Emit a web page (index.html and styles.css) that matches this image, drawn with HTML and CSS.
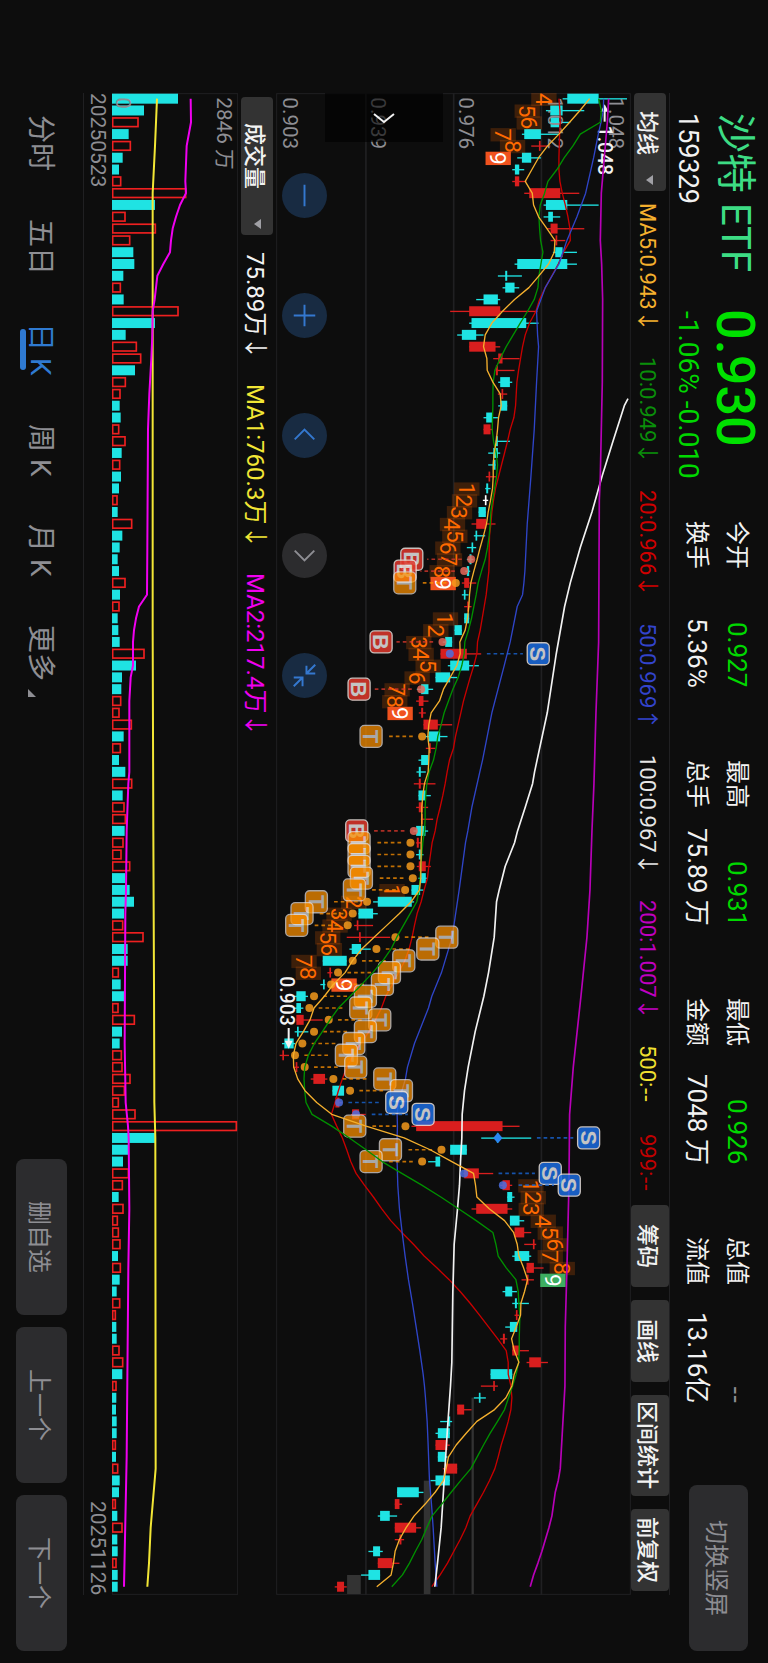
FILE: index.html
```html
<!DOCTYPE html>
<html lang="zh-CN">
<head>
<meta charset="utf-8">
<meta name="viewport" content="width=device-width, initial-scale=1">
<title>沙特ETF 159329</title>
<link rel="stylesheet" href="styles.css">
</head>
<body>
<main class="screen">
  <header class="header">
    <div class="identity">
      <h1 class="name">沙特 ETF</h1>
      <div class="code">159329</div>
    </div>
    <div class="quote">
      <div class="price">0.930</div>
      <div class="change">-1.06% -0.010</div>
    </div>
    <dl class="stats">
      <div class="stat"><dt>今开</dt><dd class="down">0.927</dd></div>
      <div class="stat"><dt>最高</dt><dd class="down">0.931</dd></div>
      <div class="stat"><dt>最低</dt><dd class="down">0.926</dd></div>
      <div class="stat"><dt>总值</dt><dd class="muted">--</dd></div>
      <div class="stat"><dt>换手</dt><dd>5.36%</dd></div>
      <div class="stat"><dt>总手</dt><dd>75.89 万</dd></div>
      <div class="stat"><dt>金额</dt><dd>7048 万</dd></div>
      <div class="stat"><dt>流值</dt><dd>13.16亿</dd></div>
    </dl>
    <button class="pill switch" type="button">切换竖屏</button>
  </header>

  <section class="ma-bar">
    <button class="picker" type="button">均线<svg class="caret" viewBox="0 0 7 10"><path d="M7 0v10L0 5z"/></svg></button>
    <div class="ma-list">
      <span class="ma5">MA5:0.943<span class="arrow">↓</span></span>
      <span class="ma10">10:0.949<span class="arrow">↓</span></span>
      <span class="ma20">20:0.966<span class="arrow">↓</span></span>
      <span class="ma50">50:0.969<span class="arrow">↑</span></span>
      <span class="ma100">100:0.967<span class="arrow">↓</span></span>
      <span class="ma200">200:1.007<span class="arrow">↓</span></span>
      <span class="ma500">500:<span class="dashes">--</span></span>
      <span class="ma999">999:<span class="dashes">--</span></span>
    </div>
    <div class="tools">
      <button class="tool" type="button">筹码</button>
      <button class="tool" type="button">画线</button>
      <button class="tool wide" type="button">区间统计</button>
      <button class="tool" type="button">前复权</button>
    </div>
  </section>

  <section class="chart">
    <svg class="plot" id="price-plot" viewBox="18 0 1064 4506" preserveAspectRatio="none"></svg>
    <button class="collapse" type="button" aria-label="收起"><svg viewBox="0 0 24 12"><path d="M2 2l10 8 10-8"/></svg></button>
    <div class="controls">
      <button class="round" type="button" aria-label="缩小"><svg viewBox="0 0 46 46"><path d="M23 12v22"/></svg></button>
      <button class="round" type="button" aria-label="放大"><svg viewBox="0 0 46 46"><path d="M23 12v22M12 23h22"/></svg></button>
      <button class="round" type="button" aria-label="向左"><svg viewBox="0 0 46 46"><path d="M13 27l10-10 10 10"/></svg></button>
      <button class="round off" type="button" aria-label="向右"><svg viewBox="0 0 46 46"><path d="M13 18l10 10 10-10"/></svg></button>
      <button class="round" type="button" aria-label="退出全屏"><svg viewBox="0 0 46 46"><path d="M34 12l-9 9M25 13v8h9M12 34l9-9M12 25h9v9"/></svg></button>
    </div>
  </section>

  <section class="volume-bar">
    <button class="picker volume-picker" type="button">成交量<svg class="caret" viewBox="0 0 7 10"><path d="M7 0v10L0 5z"/></svg></button>
    <span class="vol">75.89万<span class="arrow">↓</span></span>
    <span class="vol1">MA1:760.3万<span class="arrow">↓</span></span>
    <span class="vol2">MA2:217.4万<span class="arrow">↓</span></span>
  </section>

  <section class="volume">
    <svg class="plot" id="volume-plot" viewBox="336 0 378 4506" preserveAspectRatio="none"></svg>
  </section>
  <div class="dates"><span>20250523</span><span>20251126</span></div>

  <footer class="footer">
    <nav class="tabs">
      <a class="tab" href="#min">分时</a>
      <a class="tab" href="#five">五日</a>
      <a class="tab current" href="#day">日 K</a>
      <a class="tab" href="#week">周 K</a>
      <a class="tab" href="#month">月 K</a>
      <a class="tab" href="#more">更多<svg class="corner" viewBox="0 0 8 8"><path d="M0 0v8h8z"/></svg></a>
    </nav>
    <div class="actions">
      <button class="pill" type="button">删自选</button>
      <button class="pill" type="button">上一个</button>
      <button class="pill" type="button">下一个</button>
    </div>
  </footer>
</main>
<script src="script.js"></script>
</body>
</html>
```
FILE: styles.css
```css
* { box-sizing: border-box; }

body {
  margin: 0;
  background: #0d0d0d;
  color: #f2f2f2;
  font-family: Roboto, "Noto Sans CJK SC", sans-serif;
}

button {
  margin: 0;
  padding: 0;
  border: 0;
  font: inherit;
  color: inherit;
  writing-mode: inherit;
  text-orientation: inherit;
  white-space: nowrap;
}

svg { writing-mode: horizontal-tb; display: block; }

/* The screen reads sideways: inline runs down, rows stack right to left. */
.screen {
  writing-mode: vertical-rl;
  text-orientation: sideways;
  display: flex;
  flex-direction: column;
  inline-size: 100vh;
  block-size: 100vw;
  white-space: nowrap;
  overflow: hidden;
}

.header {
  display: flex;
  flex: none;
  block-size: 98px;
  padding-inline: 113px 12px;
}
.identity, .quote { padding-block-start: 7px; }
.identity { inline-size: 196px; }
.quote { inline-size: 212px; }
.name {
  margin: 0;
  font-size: 40px;
  font-weight: 400;
  line-height: 52px;
  color: #3ddc84;
}
.code, .change { line-height: 42px; }
.code { font-size: 27px; }
.change { font-size: 28px; padding-inline-start: 2px; }
.price { font-size: 54px; font-weight: 500; line-height: 52px; color: #00e000; }
.change, .down { color: #00d800; }
.muted { color: #8e8e93; font-family: "Liberation Sans", sans-serif; }

.stats {
  flex: 1;
  display: grid;
  grid-template-columns: repeat(4, 1fr);
  grid-template-rows: 40px 40px;
  column-gap: 72px;
  margin: 0;
  padding-block-start: 11px;
}
.stat {
  display: flex;
  justify-content: space-between;
  line-height: 40px;
}
.stat dt { font-size: 24px; }
.stat dd { margin: 0; font-size: 26px; }

.pill {
  inline-size: 156px;
  block-size: 51px;
  border-radius: 8px;
  background: #2c2c2e;
  color: #8e8e93;
  font-size: 24px;
}
.switch {
  inline-size: 166px;
  block-size: 59px;
  margin-block-start: 20px;
  margin-inline-start: 82px;
}

.ma-bar {
  display: flex;
  flex: none;
  align-items: center;
  block-size: 39px;
  margin-inline: 93px 68px;
  padding-inline-end: 4px;
  border-block-start: 1px solid #202022;
  font-size: 22px;
}
.arrow { margin-inline-end: -6px; }
.dashes { font-family: "Liberation Sans", sans-serif; }
.picker {
  display: flex;
  flex: none;
  align-items: center;
  justify-content: space-between;
  inline-size: 98px;
  block-size: 32px;
  padding-inline: 18px 6px;
  border-radius: 4px;
  background: #333;
  font-size: 22px;
  font-weight: 500;
}
.caret { width: 7px; height: 10px; fill: #a0a0a5; }
.ma-bar .caret { margin-inline-end: 2px; }
.ma-list {
  flex: 1;
  display: flex;
  align-items: baseline;
  justify-content: space-between;
  padding-inline: 12px 14px;
}
.tools { display: flex; gap: 13px; }
.tool {
  inline-size: 82px;
  block-size: 38px;
  border-radius: 4px;
  background: #333;
  font-weight: 500;
}
.wide { inline-size: 101px; }

.ma5 { color: #f5b02e; }
.ma10 { color: #0a8f0a; }
.ma20 { color: #d00000; }
.ma50 { color: #3344cc; }
.ma100 { color: #e6e6e6; }
.ma200 { color: #c000c0; }
.ma500 { color: #f0e030; }
.ma999 { color: #c00000; }

.chart {
  position: relative;
  flex: 1;
  margin-inline: 93px 68px;
}
.plot { position: absolute; inset: 0; width: 100%; height: 100%; }
.plot text { font-family: Roboto, "Noto Sans CJK SC", sans-serif; }
.plot .badge { font-family: "Liberation Sans", sans-serif; }

.collapse {
  position: absolute;
  left: 49px;
  top: 0;
  display: grid;
  place-items: center;
  width: 118px;
  height: 49px;
  background: rgb(0 0 0 / 60%);
}
.collapse svg { width: 24px; height: 12px; }
.controls {
  position: absolute;
  left: 6px;
  top: 80px;
  display: flex;
  gap: 75px;
}
.round {
  width: 45px;
  height: 45px;
  border-radius: 50%;
  background: #182b42;
  color: #3478cf;
}
.round svg { width: 45px; height: 45px; }
.round path, .collapse path { fill: none; stroke: currentColor; stroke-width: 2; }
.off { background: #2c2c2e; color: #8e8e93; }

.volume-bar {
  display: flex;
  flex: none;
  align-items: center;
  gap: 30px;
  block-size: 38px;
  margin-inline: 97px 68px;
  font-size: 24px;
}
.volume-picker { inline-size: 138px; padding-inline-start: 26px; margin-inline-end: -13px; }
.vol1 { color: #f2e635; }
.vol2 { color: #f000f0; }

.volume {
  position: relative;
  flex: none;
  block-size: 126px;
  margin-inline: 93px 68px;
}
.dates {
  display: flex;
  flex: none;
  justify-content: space-between;
  block-size: 29px;
  margin-inline: 93px 68px;
  border-block-end: 1px solid #202022;
  color: #8e8e93;
  font-size: 21px;
  line-height: 28px;
}

.footer {
  display: flex;
  flex: none;
  justify-content: space-between;
  align-items: center;
  block-size: 83px;
  padding-inline: 115px 12px;
}
.tabs { display: flex; gap: 48px; margin-block-start: 4px; }
.tab {
  position: relative;
  color: #8e8e93;
  font-size: 28px;
  line-height: 44px;
  text-decoration: none;
}
.current { color: #2f7ad1; }
.current::after {
  content: "";
  position: absolute;
  inset-block-end: 2px;
  inset-inline: 6px;
  block-size: 6px;
  border-radius: 3px;
  background: #2f7ad1;
}
.corner {
  position: absolute;
  left: 10px;
  bottom: -16px;
  width: 8px;
  height: 8px;
  fill: #8e8e93;
}
.actions { display: flex; gap: 12px; }
```
FILE: script.js
```js
const NS = 'http://www.w3.org/2000/svg';
const CYAN = '#1fe3e3';
const RED = '#d91e1e';
const at = i => 17 + 35.43 * i;

function add(parent, tag, attrs, text) {
  const el = document.createElementNS(NS, tag);
  for (const key in attrs) el.setAttribute(key, attrs[key]);
  if (text) el.textContent = text;
  parent.appendChild(el);
  return el;
}

function label(parent, text, x, y, size, fill, extra) {
  add(parent, 'text', Object.assign({
    transform: `translate(${x - size * 0.355} ${y}) rotate(90)`,
    'font-size': size, fill
  }, extra), text);
}

function line(parent, points, stroke, width) {
  add(parent, 'polyline', {
    points: points.map(p => `${p[1]},${at(p[0])}`).join(' '),
    fill: 'none', stroke, 'stroke-width': width, 'stroke-linejoin': 'round'
  });
}
const series = text => text.split(' ').map((v, i) => [i, +v]);
const pairs = text => text.split(' ').map(p => p.split(',').map(Number));

/* Price chart: low, body start, body end, high, colour. */
const candles = `877,891,985,1070,c 827,840,877,942,c 834,841,867,900,c 755,762,812,866,c 783,806,811,840,r
741,755,783,812,c 726,734,747,762,c 726,734,747,768,r 762,777,870,927,r 820,827,891,985,c
820,834,848,870,c 830,841,862,942,r 841,856,861,885,r 848,855,877,920,c 733,741,891,920,c
683,705,711,755,c 697,705,733,747,c 618,640,683,690,c 540,597,690,802,r 597,604,768,805,c
561,575,618,640,c 597,597,676,690,r 669,684,697,748,r 676,677,683,733,r 684,690,719,726,c
683,694,699,711,r 684,690,711,711,c 640,648,668,683,c 640,640,661,668,r 676,677,683,719,c
654,669,683,690,c 654,668,676,676,c 647,655,660,680,r 645,648,654,661,c 638,644,649,654,w
625,625,647,647,c 604,618,648,676,r 611,616,621,645,c 590,604,609,618,c 590,598,604,610,c
585,590,597,600,c 575,582,597,618,r 575,581,586,595,c 582,591,596,604,r 582,582,597,597,c
553,553,575,575,c 518,525,546,546,c 511,511,590,633,r 533,540,597,626,c 496,496,540,561,c
440,453,475,489,c 438,446,460,475,r 446,453,459,467,r 460,460,503,546,r 466,475,510,532,c
467,477,482,496,r 445,453,475,475,c 439,446,452,467,c 431,446,452,496,r 445,445,467,482,c
438,446,458,474,r 452,453,458,489,r 430,438,466,474,c 438,440,446,452,r 438,446,452,460,c
440,446,467,482,r 445,453,467,470,c 424,424,450,460,c 309,323,425,432,c 265,265,309,323,c
252,260,265,309,r 230,267,272,360,r 238,245,273,302,c 158,158,230,230,c 172,178,183,187,r
151,159,164,166,c 72,79,107,114,c 72,79,93,100,c 79,79,101,158,r 74,81,86,115,c
36,43,71,76,c 29,37,42,57,r 70,77,82,87,r 122,130,165,172,r 187,187,222,222,c
194,196,208,215,r 243,246,267,287,r 424,438,697,748,r 633,680,684,783,c 540,540,590,590,c
474,496,510,510,c 580,582,626,669,r 690,697,719,726,r 711,711,726,733,c 604,618,712,726,r
719,719,748,762,c 733,733,762,783,r 762,788,793,798,r 726,733,777,783,c 768,769,791,820,r
754,769,775,791,r 697,705,726,740,c 726,734,740,776,c 733,737,742,747,r 705,719,741,741,c
690,698,704,711,r 726,726,747,776,r 769,777,812,833,r 661,661,726,726,c 632,669,674,683,r
611,626,631,647,c 561,561,582,604,r 510,534,540,546,c 496,503,539,539,c 496,496,532,539,r
503,503,525,532,c 518,525,561,561,r 481,496,539,539,c 381,381,446,460,c 374,374,388,396,r
323,330,359,381,c 374,374,438,453,r 374,388,394,402,r 295,309,330,338,c 323,323,367,388,r
273,295,330,330,c 194,201,222,230,r`.split(/\s+/).map(c => c.split(','));

const ma5 = series('958 929 898 866 832 805 785 765 786 790 805 830 854 852 835 806 776 733 697 665 645 640 650 651 668 690 693 685 682 678 672 669 669 667 661 654 649 640 630 621 611 602 598 596 592 585 569 570 560 540 520 508 483 476 473 477 476 474 463 458 455 455 455 453 453 452 452 448 423 388 350 312 275 247 225 190 163 132 120 100 78 70 71 83 105 140 185 288 402 480 545 610 616 620 657 703 730 741 746 760 772 763 752 751 738 724 732 746 732 725 707 673 620 588 558 535 528 520 495 465 432 408 388 375 370 363 320');
const ma10 = series('985 993 990 930 908 882 860 833 823 810 806 808 811 818 812 806 803 792 772 750 729 708 690 674 669 668 668 667 666 670 678 682 679 673 667 662 660 657 652 645 634 624 618 611 604 595 584 582 575 564 548 535 522 513 503 498 490 477 470 467 465 465 463 458 455 452 450 447 440 420 400 380 363 338 308 275 240 205 180 157 133 115 104 102 104 108 126 185 238 288 336 395 455 512 565 618 668 677 684 708 737 744 746 749 748 747 747 745 738 727 715 703 682 660 640 621 602 572 543 515 486 470 455 436 418 397 365');
const ma20 = series('866 869 870 868 867 866 866 869 876 885 893 899 900 880 864 845 825 808 797 778 765 757 751 745 740 738 736 731 720 712 703 694 685 676 670 665 662 658 657 657 656 652 648 642 636 630 622 620 611 600 590 580 572 564 556 550 538 531 525 518 510 501 495 486 481 476 472 462 453 441 433 426 417 404 385 367 347 334 316 297 272 250 230 217 205 195 184 200 217 230 242 258 283 310 335 362 395 430 462 500 537 570 600 628 655 682 708 714 714 722 725 722 714 704 693 684 674 658 640 620 600 587 570 551 532 510 485');
const ma50 = pairs('0,1000 1,999 2,992 3,984 5,970 8,946 10,920 12,890 14,866 16,825 18,799 20,802 21,805 24,799 28,792 32,782 36,771 40,764 41,761 42,757 43,741 46,720 48,702 52,665 56,637 60,605 62,593 63,586 67,567 71,546 74,514 76,485 77,475 80,433 82,412 83,406 85,385 86,381 87,382 89,380 92,383 94,388 96,396 98,405 100,415 102,427 104,438 106,449 108,459 109,463 110,466 112,471 114,474 117,478 119,484 121,489 124,495 126,500');
const ma100 = pairs('25.4,1073 26,1062 29,1028 32,995 35,965 38,930 41,900 43,883 47,858 52,831 57,793 58,787 60,765 62,742 63,733 65,705 67,687 68,679 71,672 74,655 76,641 79,615 82,594 84,583 86,576 88,575 90,571 92,568 94,562 97,552 101,548 105,546 107,545 109,541 113,531 117,522 121,513 124,502 126,494');
const ma200 = pairs('0,1015 2,1011 8,993 12,990 14,994 17,997 24,996 32,990 34,987 46,985 52,977 58,971 62,965 67,959 71,950 76,932 82,909 86,898 92,896 99,890 104,885 109,884 113,876 116,870 117,864 118,855 120,845 121,836 123,815 124,803 125,790 126,780');

/* Sequence counts: first index, then a centre for each digit. */
const counts = [
  [0, 4, [821, 771, 777, 699, 727, 684], '#f0521e'],
  [33, 1, [590, 583, 568, 547, 554, 533, 538, 516, 519], '#f0521e'],
  [44, 1, [526, 497, 446, 453, 474, 441, 381, 374, 390], '#f0521e'],
  [67, 1, [366, 251, 207, 195, 173, 178, 102, 115, 222], '#f0521e'],
  [92, 1, [782, 789, 783, 819, 840, 855, 840, 876, 848], '#3dae60']
];

/* Trades: kind, index, badge centre, anchor, optional start of the leader. */
const trades = `B,39,425,603 B,40,405,582 T,41,404,557 B,46,333,517 S,47,804,539,650 B,50,267,453
T,54,303,456 B,62,260,431 T,63,267,421 T,64,267,421 T,65,267,421 T,66,274,428 T,67,253,405
T,68,139,291 T,69,96,248 T,70,80,233 T,71,530,376 T,72,473,319 T,73,401,248 T,74,358,204
T,75,337,183 T,76,286,132 T,77,272,118 T,78,329,176 T,79,286,132 T,80,251,97 T,81,229,75
T,82,257,104 T,83,344,190 T,84,394,240 S,85,380,207 S,86,459,258,305 T,87,254,406
S,88,955,683,800 T,89,361,514 T,90,303,456 S,91,840,582,685 S,92,897,698,745`.split(/\s+/).map(t => t.split(','));

const price = document.getElementById('price-plot');
[287, 550, 813].forEach(x => add(price, 'rect', { x: x - 2, y: 0, width: 5, height: 4506, fill: '#202022' }));
add(price, 'rect', { x: 20, y: 2, width: 1060, height: 4502, fill: 'none', stroke: '#202022', 'stroke-width': 3 });
[[231, 41, 4446], [461, 20, 4163], [604, 7, 3914]].forEach(z =>
  add(price, 'rect', { x: z[0], y: z[2], width: z[1], height: 4503 - z[2], fill: '#333' }));

candles.forEach((c, i) => {
  const fill = { c: CYAN, r: RED, w: '#fff' }[c[4]];
  add(price, 'rect', { x: c[0], y: at(i) - 1.5, width: c[3] - c[0], height: 4, fill });
  add(price, 'rect', { x: c[1], y: at(i) - 15, width: c[2] - c[1], height: 30, fill });
});

[[60, '0.903'], [324, '0.939'], [589, '0.976'], [855, '1.012'], [1039, '1.048']].forEach(l =>
  label(price, l[1], l[0], 13, 62, '#8e8e93'));

label(price, '1.048', 1003, 98, 58, '#f2f2f2', { 'font-weight': 500 });
add(price, 'path', { d: 'M1003 86V52', stroke: '#f2f2f2', 'stroke-width': 6 });
add(price, 'path', { d: 'M991 56L1003 34L1015 56Z', fill: '#f2f2f2' });
label(price, '0.903', 52, 2650, 58, '#f2f2f2', { 'font-weight': 500 });
add(price, 'path', { d: 'M56 2805V2850', stroke: '#f2f2f2', 'stroke-width': 6 });
add(price, 'path', { d: 'M44 2843L56 2867L68 2843Z', fill: '#f2f2f2' });

counts.forEach(([start, first, xs, hot]) => xs.forEach((x, k) => {
  const n = first + k;
  const y = at(start + k) + 2;
  add(price, 'rect', {
    x: x - 38, y: y - 20, width: 76, height: 40,
    fill: n === 9 ? hot : '#ff6a00', 'fill-opacity': n === 9 ? 1 : 0.2
  });
  label(price, String(n), x, y, 68, n === 9 ? '#fff' : '#ff6a00', { 'text-anchor': 'middle' });
}));

line(price, ma20, '#c80000', 4);
line(price, ma50, '#2f45c8', 4);
line(price, ma100, '#f2f2f2', 5);
line(price, ma200, '#b800b8', 5);

trades.forEach(([kind, index, box, dot, from]) => {
  const y = at(+index);
  const color = { B: '#e0382c', T: '#ff9100', S: '#1a6be0' }[kind];
  const dotColor = { B: '#e8685c', T: '#f59a1c', S: '#4b6fe0' }[kind];
  const side = +box > +dot ? 1 : -1;
  add(price, 'line', {
    x1: from || +dot + side * 28, y1: y, x2: +box + side * -46, y2: y,
    stroke: color, 'stroke-width': 5, 'stroke-dasharray': '11 9', opacity: 0.75
  });
  if (index === '88') {
    add(price, 'path', { d: `M${dot} ${y - 16}l14 16l-14 16l-14 -16z`, fill: '#2a86f0' });
  } else {
    add(price, 'circle', { cx: dot, cy: y, r: 12, fill: dotColor, opacity: 0.85 });
  }
  const badge = add(price, 'g', { opacity: kind === 'T' ? 0.72 : 0.85 });
  add(badge, 'rect', {
    x: box - 33, y: y - 33, width: 66, height: 66, rx: 13,
    fill: color, stroke: '#e8e0dc', 'stroke-width': 4
  });
  label(badge, kind, +box, y, 66, '#e4e4e4', { class: 'badge', 'text-anchor': 'middle', 'font-weight': 700 });
});

line(price, ma10, '#009000', 4);
line(price, ma5, '#f5b02e', 4);

/* Volume chart: bar end, colour. */
const volumes = `534c 432c 416r 386c 393r 368c 357c 364r 559r 465c 377r 468r 391r 400c 403c 370c 363r 371c 536r 465c
377c 411r 424r 405c 378r 362r 359c 362c 358r 377r 365c 361r 363c 357c 353r 353c 397r 367c 359c 353c
357c 377r 360c 359r 353c 355c 359c 434r 408c 366c 364c 364r 359r 396r 371c 363r 357c 376c 397r 368c
374r 378r 374c 371r 365r 391r 375c 389c 402c 372c 370r 431r 383c 383c 357r 362c 372c 356r 405r 366c
359c 366r 368r 392r 375r 357r 407r 711r 465c 385c 369c 387r 369r 356c 371r 354r 357r 362r 354c 363r
359c 350c 361r 348r 349c 350c 359r 370r 367c 350r 349c 348c 350c 350c 348r 348c 355r 359c 357c 348r
352c 368r 352c 353c 350r 353c 353c`.split(/\s+/);

const volume = document.getElementById('volume-plot');
add(volume, 'rect', { x: 337, y: 2, width: 376, height: 4502, fill: 'none', stroke: '#202022', 'stroke-width': 3 });
volumes.forEach((v, i) => {
  const end = parseInt(v, 10);
  if (v.endsWith('c')) {
    add(volume, 'rect', { x: 336, y: at(i) - 15, width: end - 336, height: 30, fill: CYAN });
  } else {
    add(volume, 'rect', {
      x: 338, y: at(i) - 13, width: end - 340, height: 26,
      fill: 'none', stroke: '#ee2020', 'stroke-width': 5
    });
  }
});
line(volume, pairs('0,471 4,465 8,458 45,458 62,460 75,462 85,463 88,466 116,467 118,461 121,452 124,447 126,442'), '#f2e635', 6);
line(volume, pairs('0,572 2,573 4,560 7,556 8,558 9,540 10,528 11,518 12,513 13,510 14,490 15,472 17,464 18,458 20,457 22,454 25,448 28,444 38,442 42,441 43,417 44,408 45,402 46,399 48,399 49,392 51,388 57,388 58,385 62,380 67,378 69,376 80,374 85,377 87,384 88,386 94,388 99,385 115,380 126,372'), '#f000f0', 6);
label(volume, '0', 371, 13, 62, '#8e8e93');
label(volume, '2846 万', 673, 13, 62, '#8e8e93');
```
